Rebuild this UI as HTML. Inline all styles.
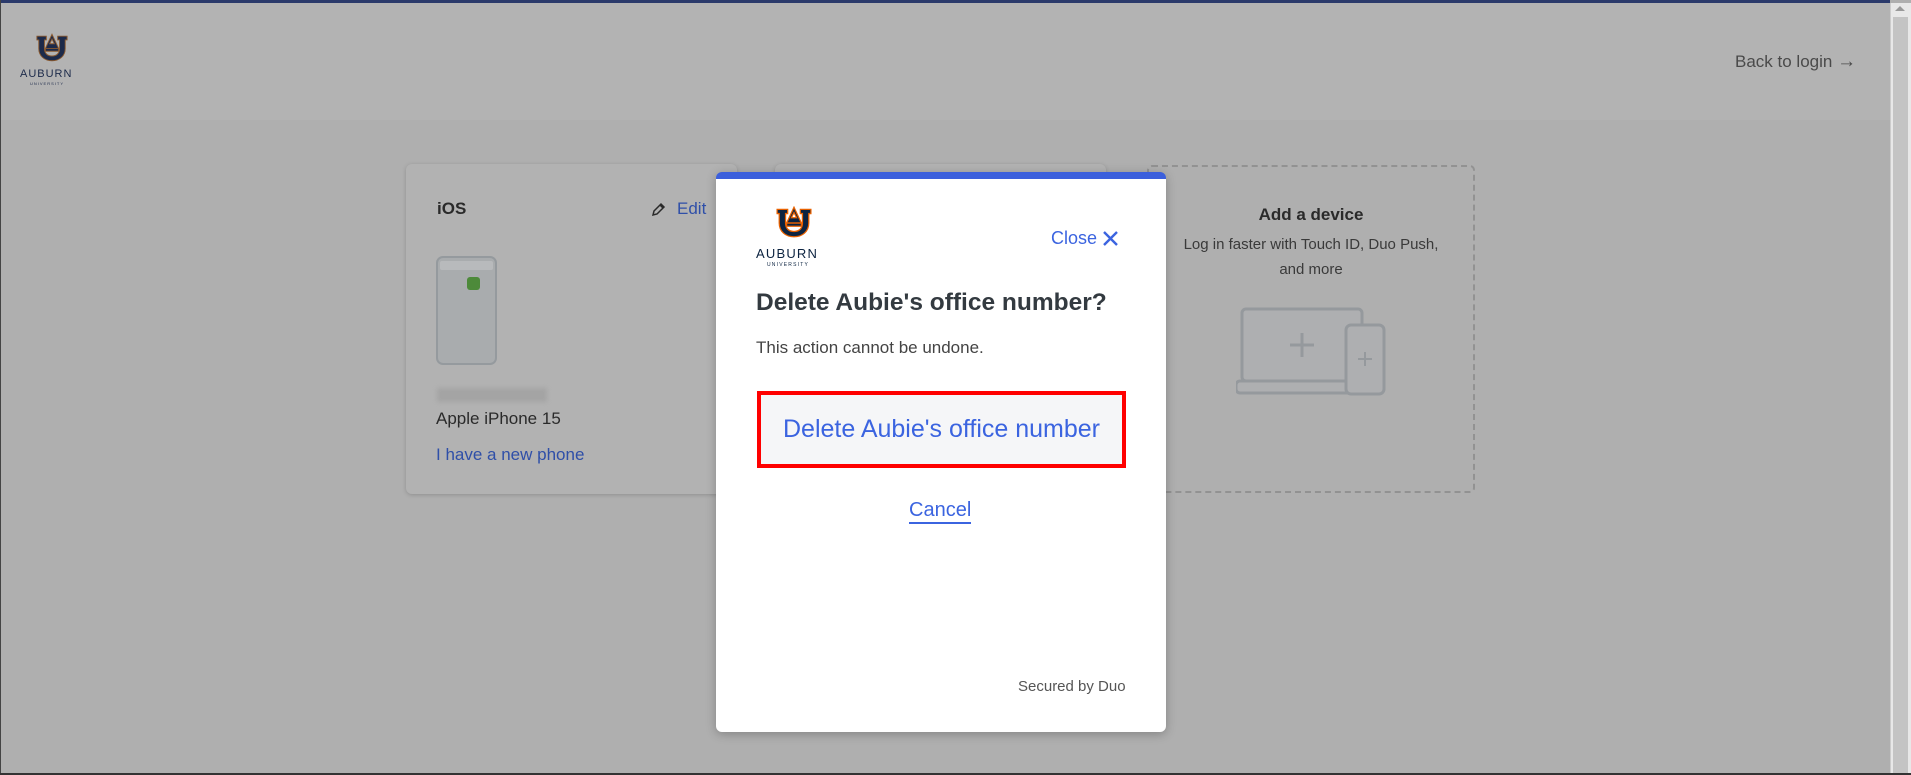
<!DOCTYPE html>
<html><head><meta charset="utf-8"><style>
*{margin:0;padding:0;box-sizing:border-box}
body{width:1911px;height:775px;overflow:hidden;background:#afafaf;font-family:"Liberation Sans",Arial,sans-serif;position:relative}
.abs{position:absolute}
.hdr{left:0;top:0;width:1890px;height:120px;background:#b3b3b3;border-top:3px solid #2b3a6b;border-left:1px solid #555}
.card{background:#b2b2b2;border-radius:6px;box-shadow:0 1px 4px rgba(0,0,0,.18)}
.modal{left:716px;top:172px;width:450px;height:560px;background:#fff;border-radius:6px;border-top:7px solid #3b5fdc;box-shadow:0 2px 10px rgba(0,0,0,.25)}
</style></head><body>
<div class="abs hdr"></div>
<div class="abs" style="left:0;top:0;width:1px;height:775px;background:#444"></div>
<div class="abs" style="left:0;top:773px;width:1911px;height:2px;background:#333"></div>
<div class="abs" style="left:1890px;top:3px;width:21px;height:770px;background:#e8e8e8;border-left:1px solid #ccc"></div>
<div class="abs" style="left:1893px;top:17px;width:15px;height:756px;background:#c4c4c4"></div>
<div class="abs" style="left:1895px;top:6px;width:0;height:0;border-left:5px solid transparent;border-right:5px solid transparent;border-bottom:5px solid #999"></div>

<svg width="0" height="0" style="position:absolute"><defs>
<g id="au">
<path d="M2 3h10v4h-2v9c0 5 3 8 8 8s8-3 8-8V7h-2V3h10v4h-2v9c0 8-6 13-14 13S4 24 4 16V7H2z"/>
<path d="M18 1l7 15h-14z M15.5 11h5l-2.5-5z" fill-rule="evenodd"/>
<path d="M11 16h14v3H11z"/>
</g></defs></svg>

<svg class="abs" style="left:35px;top:33px" width="34" height="29" viewBox="0 0 36 30"><use href="#au" fill="#1c2a4a" stroke="#8a5a30" stroke-width="1"/></svg>
<div class="abs" style="left:20px;top:68px;font-size:11px;letter-spacing:1px;color:#1c2a4a">AUBURN</div>
<div class="abs" style="left:30px;top:81px;font-size:4px;letter-spacing:1px;color:#1c2a4a">UNIVERSITY</div>
<div class="abs" style="left:1735px;top:51px;font-size:17px;color:#4a4a4a">Back to login <span style="font-size:19px">→</span></div>

<div class="abs card" style="left:406px;top:164px;width:331px;height:330px"></div>
<div class="abs" style="left:437px;top:199px;font-size:17px;font-weight:bold;color:#2a2a2a">iOS</div>
<svg class="abs" style="left:651px;top:202px" width="15" height="15" viewBox="0 0 15 15"><path d="M2 13l1-4 7-7 3 3-7 7z M9 3l3 3" fill="none" stroke="#2a2a2a" stroke-width="1.5"/></svg>
<div class="abs" style="left:677px;top:199px;font-size:17px;color:#2f4fa8">Edit</div>
<div class="abs" style="left:436px;top:256px;width:61px;height:109px;border:2px solid #959a9e;border-radius:7px;background:#a9acae"></div>
<div class="abs" style="left:440px;top:261px;width:53px;height:9px;background:#b8babc;border-radius:2px"></div>
<div class="abs" style="left:467px;top:277px;width:13px;height:13px;background:#4d8a3a;border-radius:3px"></div>
<div class="abs" style="left:437px;top:388px;width:110px;height:14px;background:#a4a4a4;filter:blur(2px)"></div>
<div class="abs" style="left:436px;top:409px;font-size:17px;color:#2a2a2a">Apple iPhone 15</div>
<div class="abs" style="left:436px;top:445px;font-size:17px;color:#2f4fa8">I have a new phone</div>

<div class="abs card" style="left:775px;top:164px;width:331px;height:330px"></div>

<div class="abs" style="left:1147px;top:165px;width:328px;height:328px;border:2px dashed #929292;border-radius:5px"></div>
<div class="abs" style="left:1147px;top:205px;width:328px;text-align:center;font-size:17px;font-weight:bold;color:#2a2a2a">Add a device</div>
<div class="abs" style="left:1147px;top:232px;width:328px;text-align:center;font-size:15px;line-height:25px;color:#3a3a3a">Log in faster with Touch ID, Duo Push,<br>and more</div>
<svg class="abs" style="left:1236px;top:305px" width="152" height="92" viewBox="0 0 152 92">
<rect x="6" y="4" width="120" height="72" rx="4" fill="#aeafb1" stroke="#95999d" stroke-width="3"/>
<rect x="0" y="76" width="130" height="12" rx="4" fill="#aeafb1" stroke="#95999d" stroke-width="3"/>
<path d="M66 28v24M54 40h24" stroke="#95999d" stroke-width="3"/>
<rect x="110" y="20" width="38" height="69" rx="5" fill="#aeafb1" stroke="#95999d" stroke-width="3"/>
<path d="M129 47v14M122 54h14" stroke="#95999d" stroke-width="2"/>
</svg>

<div class="abs modal"></div>
<svg class="abs" style="left:775px;top:206px" width="38" height="32" viewBox="0 0 36 30"><use href="#au" fill="#0c2340" stroke="#e86100" stroke-width="1.2"/></svg>
<div class="abs" style="left:756px;top:246px;font-size:13px;letter-spacing:1.2px;color:#0c2340">AUBURN</div>
<div class="abs" style="left:767px;top:262px;font-size:5px;letter-spacing:1.2px;color:#0c2340">UNIVERSITY</div>
<div class="abs" style="left:1051px;top:228px;font-size:18px;color:#3b64e0">Close</div>
<svg class="abs" style="left:1103px;top:231px" width="15" height="15" viewBox="0 0 15 15"><path d="M1 1l13 13M14 1L1 14" stroke="#3b64e0" stroke-width="2.4"/></svg>
<div class="abs" style="left:756px;top:289px;font-size:24.5px;font-weight:bold;color:#333a40">Delete Aubie's office number?</div>
<div class="abs" style="left:756px;top:338px;font-size:17px;color:#444">This action cannot be undone.</div>
<div class="abs" style="left:757px;top:391px;width:369px;height:77px;border:4px solid #f00;background:#f5f6f8;text-align:center;font-size:25px;line-height:69px;color:#3b64e0">Delete Aubie's office number</div>
<div class="abs" style="left:909px;top:499px;font-size:20px;color:#3b64e0;border-bottom:2px solid #3b64e0;line-height:23px">Cancel</div>
<div class="abs" style="left:1018px;top:678px;font-size:15px;color:#555">Secured by Duo</div>
</body></html>
